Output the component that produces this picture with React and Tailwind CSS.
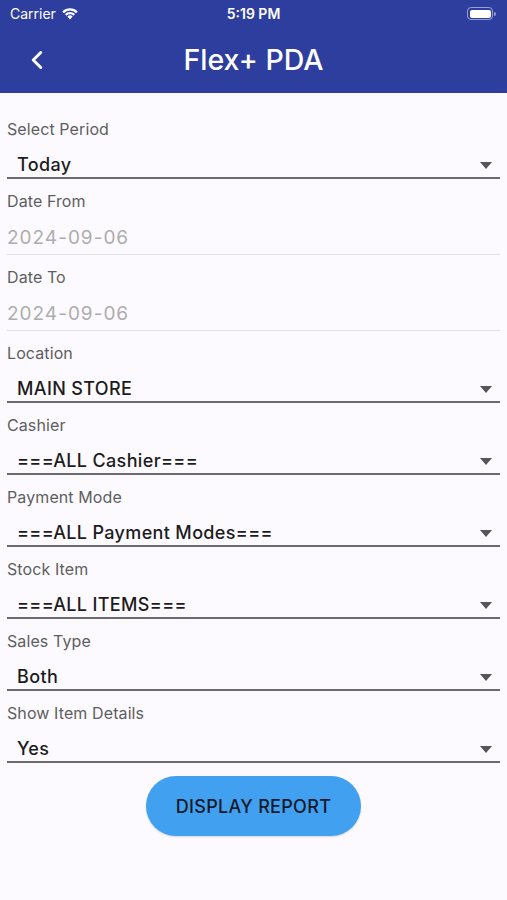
import { ChevronLeft } from 'lucide-react'

const font = { fontFamily: 'Inter, "Noto Sans", sans-serif' }

const dropdowns = [
  ['Location', 'MAIN STORE'],
  ['Cashier', '===ALL Cashier==='],
  ['Payment Mode', '===ALL Payment Modes==='],
  ['Stock Item', '===ALL ITEMS==='],
  ['Sales Type', 'Both'],
  ['Show Item Details', 'Yes'],
]

function Caret() {
  return (
    <svg width="12" height="7" viewBox="0 0 12 7" className="mb-[8px]">
      <path d="M0 0h12L6 7z" fill="#555" />
    </svg>
  )
}

function Dropdown({ label, value }) {
  return (
    <div className="pt-[10px]">
      <div className="h-6 text-[16px] leading-6 tracking-[0.1px] text-[#5e5e5e]">{label}</div>
      <div className="flex h-[38px] items-end justify-between border-b-2 border-[#6b6b6b] pl-[10px] pr-[8px]">
        <span className="text-[18px] leading-6 font-medium tracking-[0.35px] text-[#1c1c1c]">{value}</span>
        <Caret />
      </div>
    </div>
  )
}

function DateField({ label, value }) {
  return (
    <div className="pt-[10px]">
      <div className="h-6 text-[16px] leading-6 tracking-[0.1px] text-[#5e5e5e]">{label}</div>
      <div className="h-[42px] border-b border-[#e2e0e4] pt-[12px]">
        <span className="text-[19px] leading-[26px] tracking-[1px] text-[#adadad]">{value}</span>
      </div>
    </div>
  )
}

function StatusBar() {
  return (
    <div className="flex h-[27px] items-center justify-between px-[10px] text-white">
      <div className="flex w-[120px] items-center gap-[5px] text-[14px]">
        Carrier
        <svg width="18" height="13" viewBox="0 0 18 13">
          <path d="M9 12.5 6.4 9.6a3.7 3.7 0 0 1 5.2 0z" fill="white" />
          <path d="M3.9 7.1a7.2 7.2 0 0 1 10.2 0l-1.6 1.7a4.9 4.9 0 0 0-7 0z" fill="white" />
          <path d="M1.3 4.5a10.8 10.8 0 0 1 15.4 0l-1.6 1.7a8.5 8.5 0 0 0-12.2 0z" fill="white" />
        </svg>
      </div>
      <div className="text-[14px] font-semibold">5:19 PM</div>
      <div className="flex w-[120px] justify-end pr-[1px]">
        <div className="flex items-center">
          <div className="flex h-[13px] w-[26px] items-center rounded-[4px] border border-white/50 p-[1.5px]">
            <div className="h-full w-full rounded-[2px] bg-white" />
          </div>
          <div className="ml-[1px] h-[4px] w-[2px] rounded-r-sm bg-white/50" />
        </div>
      </div>
    </div>
  )
}

export default function App() {
  return (
    <div className="min-h-[900px] w-[507px] bg-[#fcfafe]" style={font}>
      <header className="h-[93px] bg-[#2e3e9e]">
        <StatusBar />
        <div className="relative flex h-[66px] items-center justify-center">
          <ChevronLeft className="absolute left-[22px] top-[18px] text-white" size={30} strokeWidth={2.4} />
          <h1 className="text-[28.5px] font-medium text-white">Flex+ PDA</h1>
        </div>
      </header>
      <main className="px-[7px] pt-[14px]">
        <Dropdown label="Select Period" value="Today" />
        <DateField label="Date From" value="2024-09-06" />
        <DateField label="Date To" value="2024-09-06" />
        {dropdowns.map(([label, value]) => (
          <Dropdown key={label} label={label} value={value} />
        ))}
        <div className="flex justify-center pt-[13px]">
          <button className="h-[60px] w-[215px] rounded-full bg-[#42a0f0] text-[18px] font-medium tracking-[0.3px] text-[#141a2a] shadow-[0_1px_2px_rgba(0,0,0,0.15)]">
            DISPLAY REPORT
          </button>
        </div>
      </main>
    </div>
  )
}
